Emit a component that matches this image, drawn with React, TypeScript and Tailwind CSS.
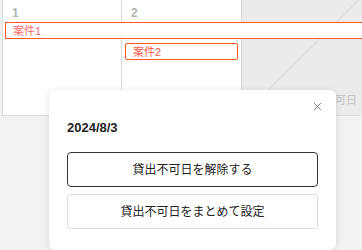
import React from 'react';
import { X } from 'lucide-react';

const font = { fontFamily: '"Liberation Sans", "Noto Sans CJK JP", sans-serif' };

export default function App() {
  return (
    <div className="relative w-[362px] h-[250px] overflow-hidden bg-[#f2f2f2]" style={font}>
      {/* Calendar row */}
      <div className="ml-[2px] grid grid-cols-[119px_120px_121px] h-[116px] border-b border-[#dcdcdc]">
        <div className="bg-white border-l border-[#d9d9d9] px-[9px] pt-[7px]">
          <div className="text-[12px] leading-[12px] font-bold text-[#b3b3b3]">1</div>
        </div>
        <div className="bg-white border-l border-[#d9d9d9] px-[9px] pt-[7px]">
          <div className="text-[12px] leading-[12px] font-bold text-[#b3b3b3]">2</div>
        </div>
        <div className="relative bg-[#ebebeb] border-l border-[#d9d9d9] rounded-br-[4px]">
          <svg className="absolute inset-0" width="117" height="116" viewBox="0 0 117 116">
            <line x1="0" y1="116" x2="117" y2="0" stroke="#d6d6d6" strokeWidth="1" />
          </svg>
          <span className="absolute right-[5px] bottom-[7px] text-[11px] text-[#c2c2c2]">貸出不可日</span>
        </div>
      </div>

      {/* Events */}
      <div className="absolute left-[5px] top-[22px] w-[370px] h-[17px] bg-white border-[1.5px] border-[#ff5722] px-[7px] flex items-center">
        <span className="text-[11px] leading-[12px] text-[#ff6b6b]">案件1</span>
      </div>
      <div className="absolute left-[125px] top-[43px] w-[113px] h-[17px] bg-white border border-[#ff5722] rounded-[2px] px-[7px] flex items-center">
        <span className="text-[11px] leading-[12px] text-[#ff5a4a]">案件2</span>
      </div>

      {/* Popover */}
      <div className="absolute left-[49px] top-[90px] w-[287px] h-[160px] bg-white rounded-[6px] shadow-[0_1px_6px_rgba(0,0,0,0.12)] px-[18px] pt-[30px]">
        <button className="absolute right-[12px] top-[10px] text-[#777]">
          <X size={13} strokeWidth={1.6} />
        </button>
        <div className="text-[13px] leading-[16px] font-bold text-[#222]">2024/8/3</div>
        <div className="mt-[16px] flex flex-col gap-[7px]">
          <button className="h-[35px] w-full rounded-[4px] border border-[#333] text-[12px] text-[#222]">
            貸出不可日を解除する
          </button>
          <button className="h-[35px] w-full rounded-[3px] border border-[#dddddd] text-[12px] text-[#222]">
            貸出不可日をまとめて設定
          </button>
        </div>
      </div>
    </div>
  );
}
